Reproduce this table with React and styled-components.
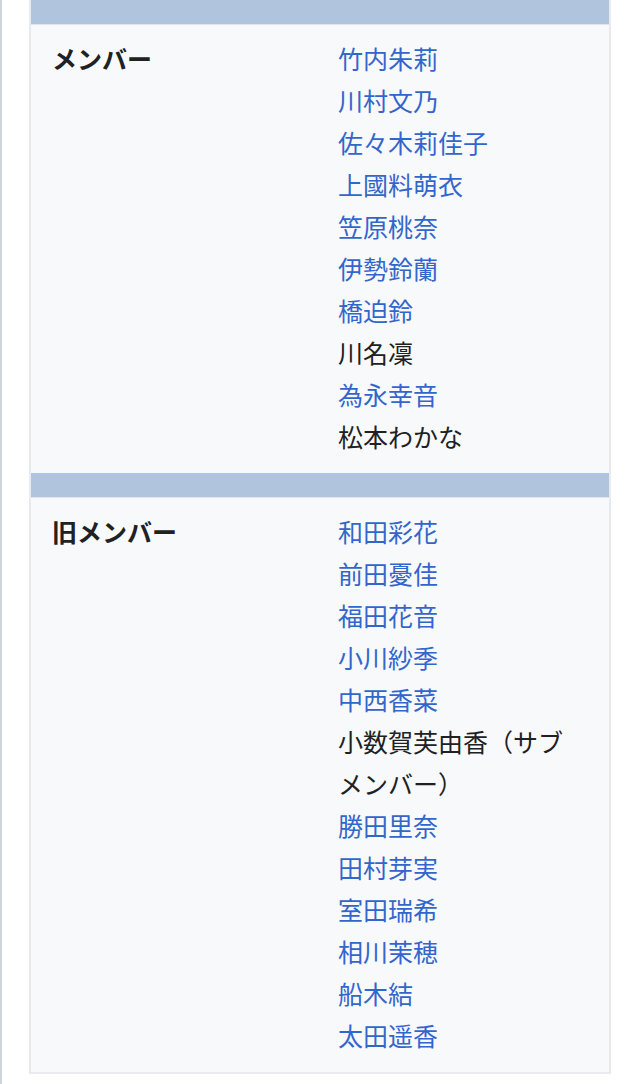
import React from 'react'
import styled, { createGlobalStyle } from 'styled-components'

const GlobalStyle = createGlobalStyle`
  * {
    margin: 0;
    padding: 0;
    box-sizing: border-box;
  }
  body {
    background: #ffffff;
    font-family: "Noto Sans CJK JP", "Noto Sans", sans-serif;
    color: #202122;
  }
`

const Page = styled.div`
  min-height: 1084px;
  padding: 0 29px 0 27px;
  border-left: 2px solid #d0d3d7;
`

const Table = styled.div`
  width: 582px;
  background: #f8f9fa;
  border: 2px solid #e8eaed;
  border-top: none;
`

const HeaderBar = styled.div`
  height: 25px;
  background: #b0c4de;
  border-bottom: 1px solid #dfe5ee;
`

const Row = styled.div`
  display: grid;
  grid-template-columns: 307px 1fr;
  padding: 12px 0 16px;
`

const Label = styled.div`
  padding-left: 21px;
  font-size: 25px;
  line-height: 42px;
  font-weight: 700;
  color: #202122;
`

const NameList = styled.ul`
  list-style: none;
  padding-right: 39px;
`

const Name = styled.li`
  font-size: 25px;
  line-height: 42px;
  color: ${(p) => (p.$link ? '#3366cc' : '#202122')};
`

const sections = [
  {
    label: 'メンバー',
    names: [
      ['竹内朱莉', true],
      ['川村文乃', true],
      ['佐々木莉佳子', true],
      ['上國料萌衣', true],
      ['笠原桃奈', true],
      ['伊勢鈴蘭', true],
      ['橋迫鈴', true],
      ['川名凜', false],
      ['為永幸音', true],
      ['松本わかな', false],
    ],
  },
  {
    label: '旧メンバー',
    names: [
      ['和田彩花', true],
      ['前田憂佳', true],
      ['福田花音', true],
      ['小川紗季', true],
      ['中西香菜', true],
      ['小数賀芙由香（サブメンバー）', false],
      ['勝田里奈', true],
      ['田村芽実', true],
      ['室田瑞希', true],
      ['相川茉穂', true],
      ['船木結', true],
      ['太田遥香', true],
    ],
  },
]

export default function App() {
  return (
    <Page>
      <GlobalStyle />
      <Table>
        {sections.map((s) => (
          <React.Fragment key={s.label}>
            <HeaderBar />
            <Row>
              <Label>{s.label}</Label>
              <NameList>
                {s.names.map(([n, link]) => (
                  <Name key={n} $link={link}>{n}</Name>
                ))}
              </NameList>
            </Row>
          </React.Fragment>
        ))}
      </Table>
    </Page>
  )
}
